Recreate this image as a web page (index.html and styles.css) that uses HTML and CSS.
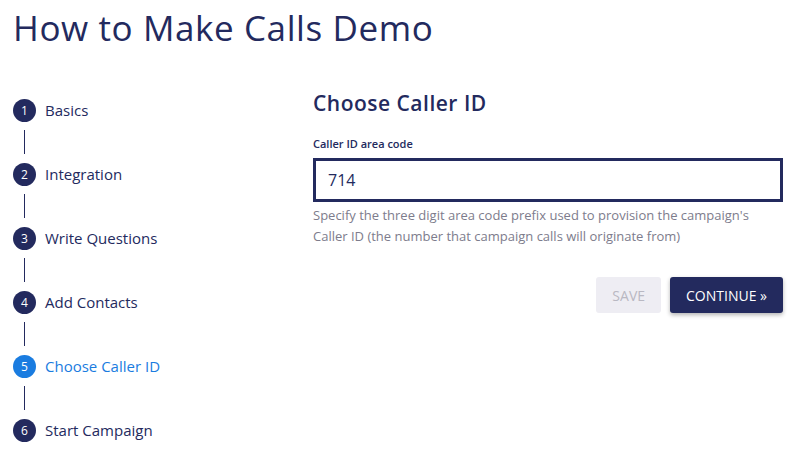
FILE: index.html
```html
<!DOCTYPE html>
<html lang="en">
<head>
    <meta charset="UTF-8">
    <meta name="viewport" content="width=device-width, initial-scale=1.0">
    <title>How to Make Calls Demo</title>
    <link rel="stylesheet" href="styles.css">
</head>
<body>
    <h1 class="page-title">How to Make Calls Demo</h1>

    <div class="wizard">
        <!-- Lista de passos -->
        <ol class="steps">
            <li class="step"><span class="step-num">1</span><span class="step-label">Basics</span></li>
            <li class="step-line"></li>
            <li class="step"><span class="step-num">2</span><span class="step-label">Integration</span></li>
            <li class="step-line"></li>
            <li class="step"><span class="step-num">3</span><span class="step-label">Write Questions</span></li>
            <li class="step-line"></li>
            <li class="step"><span class="step-num">4</span><span class="step-label">Add Contacts</span></li>
            <li class="step-line"></li>
            <li class="step active"><span class="step-num">5</span><span class="step-label">Choose Caller ID</span></li>
            <li class="step-line"></li>
            <li class="step"><span class="step-num">6</span><span class="step-label">Start Campaign</span></li>
        </ol>

        <!-- Conteúdo do passo atual -->
        <section class="panel">
            <h2 class="panel-title">Choose Caller ID</h2>
            <label class="field-label" for="areaCode">Caller ID area code</label>
            <input class="field-input" id="areaCode" type="text" value="714">
            <p class="field-help">Specify the three digit area code prefix used to provision the campaign's Caller ID (the number that campaign calls will originate from)</p>
            <div class="actions">
                <button class="btn btn-save" disabled>SAVE</button>
                <button class="btn btn-continue">CONTINUE &raquo;</button>
            </div>
        </section>
    </div>
</body>
</html>
```

FILE: styles.css
```css
:root {
    --navy: #232a5e;
    --blue: #1a7ce0;
    --muted: #7d7c8c;
}

body {
    font-family: "Open Sans", Arial, sans-serif;
    color: var(--navy);
    background: #ffffff;
    margin: 0;
    padding: 0 17px 0 13px;
}

.page-title {
    font-size: 35px;
    font-weight: 400;
    letter-spacing: 0.6px;
    margin: 6px 0 0;
    line-height: 44px;
}

.wizard {
    display: flex;
    align-items: flex-start;
    margin-top: 48px;
}

.steps {
    list-style: none;
    margin: 0;
    padding: 0;
    width: 300px;
}

.step {
    display: flex;
    align-items: center;
    height: 24px;
}

.step-num {
    width: 23px;
    height: 23px;
    border-radius: 50%;
    background: var(--navy);
    color: #ffffff;
    font-size: 12px;
    display: flex;
    align-items: center;
    justify-content: center;
    margin-right: 9px;
}

.step-label {
    font-size: 15px;
}

.step.active .step-num {
    background: var(--blue);
}

.step.active .step-label {
    color: var(--blue);
}

.step-line {
    width: 1px;
    height: 24px;
    margin: 8px 0 8px 11px;
    background: var(--navy);
}

.panel {
    flex: 1;
    margin-top: -8px;
}

.panel-title {
    font-size: 21px;
    font-weight: 600;
    letter-spacing: 0.5px;
    margin: 0 0 20px;
    line-height: 26px;
}

.field-label {
    display: block;
    font-size: 11px;
    font-weight: 600;
    margin-bottom: 7px;
}

.field-input {
    box-sizing: border-box;
    width: 100%;
    height: 44px;
    border: 3px solid var(--navy);
    padding: 0 12px;
    font-family: inherit;
    font-size: 16px;
    color: var(--navy);
    outline: none;
}

.field-help {
    font-size: 13px;
    line-height: 21px;
    color: var(--muted);
    margin: 3px 0 0;
}

.actions {
    display: flex;
    justify-content: flex-end;
    gap: 9px;
    margin-top: 30px;
}

.btn {
    height: 36px;
    border: none;
    border-radius: 3px;
    font-family: inherit;
    font-size: 14px;
    padding: 0 16px;
}

.btn-save {
    background: #eeedf3;
    color: #b9b8c2;
}

.btn-continue {
    background: var(--navy);
    color: #ffffff;
    box-shadow: 0 2px 4px rgba(0, 0, 0, 0.3);
    cursor: pointer;
}
```
